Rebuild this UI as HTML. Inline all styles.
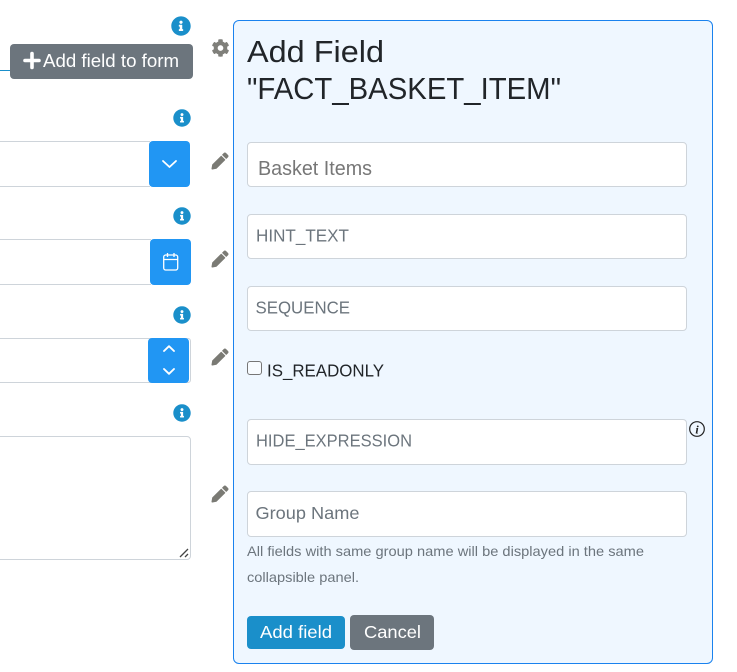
<!DOCTYPE html>
<html lang="en"><head><meta charset="utf-8"><title>Add Field</title>
<style>
html,body{margin:0;padding:0;width:737px;height:672px;overflow:hidden;background:#fff;font-family:"Liberation Sans",sans-serif}
.b{position:absolute;box-sizing:border-box}
.in{background:#fff;border:1px solid #ced4da;border-radius:4px}
.lf{background:#fff;border:1px solid #ced4da;border-right:0;left:-6px}
.blue{background:#2196f3;border-radius:4px}
svg.o{position:absolute;left:0;top:0}
text{font-family:"Liberation Sans",sans-serif}
</style></head><body>
<div class="b" style="left:0;top:70px;width:12px;height:1px;background:#1a8fca"></div>
<div class="b" style="left:10px;top:44px;width:183px;height:35px;background:#6c757d;border-radius:4px"></div>

<div class="b lf" style="top:141px;width:156px;height:46px"></div>
<div class="b blue" style="left:149px;top:141px;width:41px;height:46px"></div>
<div class="b lf" style="top:239px;width:157px;height:46px"></div>
<div class="b blue" style="left:150px;top:239px;width:41px;height:46px"></div>
<div class="b in" style="left:-6px;top:338px;width:197px;height:45px;border-radius:0 3px 3px 0"></div>
<div class="b blue" style="left:148px;top:338px;width:41px;height:45px"></div>
<div class="b in" style="left:-6px;top:436px;width:197px;height:124px"></div>

<div class="b" style="left:233px;top:20px;width:480px;height:644px;background:#eff7ff;border:1px solid #1a82ee;border-radius:6px"></div>
<div class="b in" style="left:247px;top:142px;width:440px;height:45px"></div>
<div class="b in" style="left:247px;top:214px;width:440px;height:45px"></div>
<div class="b in" style="left:247px;top:286px;width:440px;height:45px"></div>
<div class="b" style="left:247px;top:361px;width:15px;height:14px;border:1.5px solid #767676;border-radius:3px;background:#f7fbff"></div>
<div class="b in" style="left:247px;top:419px;width:440px;height:46px"></div>
<div class="b in" style="left:247px;top:491px;width:440px;height:46px"></div>
<div class="b" style="left:247px;top:616px;width:98px;height:33px;background:#1a8fca;border-radius:4px"></div>
<div class="b" style="left:350px;top:615px;width:84px;height:35px;background:#6c757d;border-radius:4px"></div>

<svg class="o" width="737" height="672" viewBox="0 0 737 672">
<defs>
<symbol id="info" viewBox="0 0 512 512"><path fill="#1a8fca" d="M256 8C119.043 8 8 119.083 8 256c0 136.997 111.043 248 248 248s248-111.003 248-248C504 119.083 392.957 8 256 8zm0 110c23.196 0 42 18.804 42 42s-18.804 42-42 42-42-18.804-42-42 18.804-42 42-42zm56 254c0 6.627-5.373 12-12 12h-88c-6.627 0-12-5.373-12-12v-24c0-6.627 5.373-12 12-12h12v-64h-12c-6.627 0-12-5.373-12-12v-24c0-6.627 5.373-12 12-12h64c6.627 0 12 5.373 12 12v100h12c6.627 0 12 5.373 12 12v24z"/></symbol>
<symbol id="pen" viewBox="0 0 512 512"><path fill="#7a7a74" d="M497.9 142.1l-46.1 46.1c-4.7 4.7-12.3 4.7-17 0l-111-111c-4.7-4.7-4.7-12.3 0-17l46.1-46.1c18.7-18.7 49.1-18.7 67.9 0l60.1 60.1c18.8 18.7 18.8 49.1 0 67.9zM284.2 99.8L21.6 362.4.4 483.9c-2.9 16.4 11.4 30.6 27.8 27.8l121.5-21.3 262.6-262.6c4.7-4.7 4.7-12.3 0-17l-111-111c-4.8-4.7-12.4-4.7-17.1 0z"/></symbol>
</defs>
<use href="#info" x="171" y="16" width="20" height="20"/>
<use href="#info" x="173" y="109" width="18" height="18"/>
<use href="#info" x="173" y="207" width="18" height="18"/>
<use href="#info" x="173" y="306" width="18" height="18"/>
<use href="#info" x="173" y="404" width="18" height="18"/>
<use href="#pen" x="211.500" y="152.500" width="17" height="17"/>
<use href="#pen" x="211.500" y="250.500" width="17" height="17"/>
<use href="#pen" x="211.500" y="348.500" width="17" height="17"/>
<use href="#pen" x="211.500" y="485.500" width="17" height="17"/>
<svg x="211.500" y="39" width="18" height="18" viewBox="0 0 512 512"><path fill="#7f7f7a" d="M487.4 315.7l-42.6-24.6c4.3-23.2 4.3-47 0-70.2l42.6-24.6c4.9-2.8 7.1-8.6 5.5-14-11.1-35.6-30-67.8-54.7-94.6-3.8-4.1-10-5.1-14.8-2.3L380.8 110c-17.9-15.4-38.5-27.3-60.8-35.1V25.8c0-5.6-3.9-10.5-9.4-11.7-36.7-8.2-74.3-7.8-109.2 0-5.5 1.2-9.4 6.1-9.4 11.7V75c-22.2 7.9-42.8 19.8-60.8 35.1L88.7 85.5c-4.9-2.8-11-1.9-14.8 2.3-24.7 26.7-43.6 58.9-54.7 94.6-1.7 5.4.6 11.2 5.5 14L67.3 221c-4.3 23.2-4.3 47 0 70.2l-42.6 24.6c-4.9 2.8-7.1 8.6-5.5 14 11.1 35.6 30 67.8 54.7 94.6 3.8 4.1 10 5.1 14.8 2.3l42.6-24.6c17.9 15.4 38.5 27.3 60.8 35.1v49.2c0 5.6 3.9 10.5 9.4 11.7 36.7 8.2 74.3 7.8 109.2 0 5.5-1.2 9.4-6.1 9.4-11.7v-49.2c22.2-7.9 42.8-19.8 60.8-35.1l42.6 24.6c4.9 2.8 11 1.9 14.8-2.3 24.7-26.7 43.6-58.9 54.7-94.6 1.5-5.5-.7-11.3-5.6-14.1zM256 336c-44.1 0-80-35.9-80-80s35.9-80 80-80 80 35.9 80 80-35.9 80-80 80z"/></svg>

<!-- plus -->
<path d="M32 53.500v14M25 60.500h14" stroke="#fff" stroke-width="3.600" stroke-linecap="round" fill="none"/>
<!-- chevrons -->
<path d="M163 161l6.500 6 6.500-6" stroke="#fff" stroke-width="1.800" fill="none" stroke-linecap="round" stroke-linejoin="round"/>
<path d="M164 351l5-4.800 5 4.800M164 369l5 4.800 5-4.800" stroke="#fff" stroke-width="1.900" fill="none" stroke-linecap="round" stroke-linejoin="round"/>
<!-- calendar -->
<g stroke="#fff" stroke-width="1.300" fill="none"><rect x="163.700" y="255" width="14" height="15" rx="2"/><path d="M163.700 259.500h14M167.500 253v4M174 253v4"/></g>
<!-- textarea resizer -->
<path d="M180 557l8-8M185 557l3-3" stroke="#444" stroke-width="1.300" fill="none"/>
<!-- italic info -->
<circle cx="697" cy="429" r="7.300" fill="none" stroke="#222" stroke-width="1.200"/>
<text x="697" y="433.500" font-size="12" font-weight="700" font-style="italic" fill="#222" text-anchor="middle" style="font-family:'Liberation Serif',serif">i</text>

<text x="43" y="67" font-size="18.500" fill="#fff" textLength="136" lengthAdjust="spacingAndGlyphs">Add field to form</text>
<text x="247" y="62" font-size="31" fill="#212529" textLength="137" lengthAdjust="spacingAndGlyphs">Add Field</text>
<text x="247" y="99" font-size="31" fill="#212529" textLength="314" lengthAdjust="spacingAndGlyphs">"FACT_BASKET_ITEM"</text>
<text x="258" y="175" font-size="20" fill="#777" textLength="114" lengthAdjust="spacingAndGlyphs">Basket Items</text>
<text x="256" y="241.500" font-size="17.500" fill="#6c757d" textLength="93" lengthAdjust="spacingAndGlyphs">HINT_TEXT</text>
<text x="255.500" y="313.500" font-size="17.500" fill="#6c757d" textLength="94.500" lengthAdjust="spacingAndGlyphs">SEQUENCE</text>
<text x="267" y="376.500" font-size="17.500" fill="#212529" textLength="117" lengthAdjust="spacingAndGlyphs">IS_READONLY</text>
<text x="256" y="446.500" font-size="17.500" fill="#6c757d" textLength="156" lengthAdjust="spacingAndGlyphs">HIDE_EXPRESSION</text>
<text x="255.500" y="519" font-size="17.500" fill="#6c757d" textLength="104" lengthAdjust="spacingAndGlyphs">Group Name</text>
<text x="247" y="556" font-size="14" fill="#6c757d" textLength="397" lengthAdjust="spacingAndGlyphs">All fields with same group name will be displayed in the same</text>
<text x="247" y="582" font-size="14" fill="#6c757d" textLength="112" lengthAdjust="spacingAndGlyphs">collapsible panel.</text>
<text x="260" y="638" font-size="17.500" fill="#fff" textLength="72" lengthAdjust="spacingAndGlyphs">Add field</text>
<text x="364" y="638" font-size="17.500" fill="#fff" textLength="57" lengthAdjust="spacingAndGlyphs">Cancel</text>
</svg>
</body></html>
